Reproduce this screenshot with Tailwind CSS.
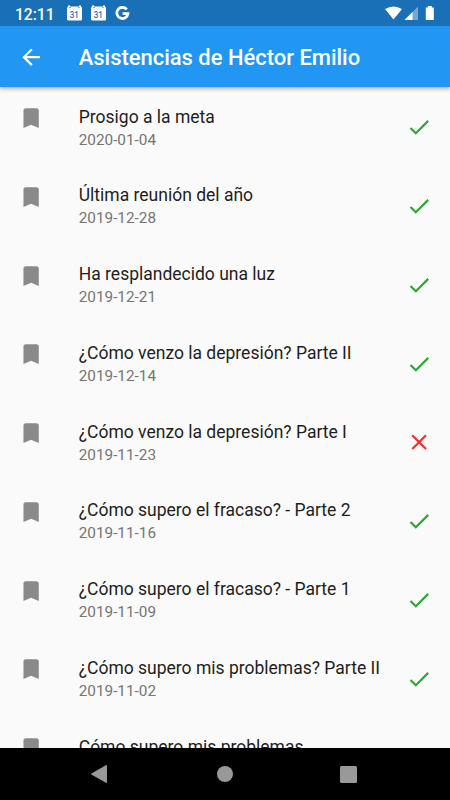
<!DOCTYPE html>
<html lang="es">
<head>
<meta charset="utf-8">
<title>Asistencias</title>
<script src="https://cdn.jsdelivr.net/npm/@tailwindcss/browser@4"></script>
</head>
<body class="w-[450px] h-[800px] overflow-hidden flex flex-col bg-[#fafafa] font-['Roboto',sans-serif]">
<header class="relative z-10 shrink-0 h-[87px] bg-[#2196f3] text-white shadow-[0_2px_4px_rgba(0,0,0,0.3)]">
  <div class="h-[26px] bg-[#1a70b7] flex items-center pl-[15px] pr-[15px]">
    <span class="w-[52px] text-[15.6px] leading-[26px] font-medium pt-[3px]">12:11</span>
    <svg class="w-[15px] h-[16px]" viewBox="0 0 15 16"><path fill="#fff" d="M1 .5h2v1h9v-1h2v1.200q1 .3 1 1.300v11q0 1.500-1.500 1.500h-12Q0 15.500 0 14V3Q0 2 1 1.700z"/><path fill="#1a70b7" d="M2.500 2h1v1h-1zM11.500 2h1v1h-1z"/><text x="7.300" y="12.800" text-anchor="middle" font-family="Roboto" font-size="9" font-weight="500" textLength="9" lengthAdjust="spacingAndGlyphs" fill="#1a70b7">31</text></svg>
    <svg class="ml-[9px] w-[15px] h-[16px]" viewBox="0 0 15 16"><path fill="#fff" d="M1 .5h2v1h9v-1h2v1.200q1 .3 1 1.300v11q0 1.500-1.500 1.500h-12Q0 15.500 0 14V3Q0 2 1 1.700z"/><path fill="#1a70b7" d="M2.500 2h1v1h-1zM11.500 2h1v1h-1z"/><text x="7.300" y="12.800" text-anchor="middle" font-family="Roboto" font-size="9" font-weight="500" textLength="9" lengthAdjust="spacingAndGlyphs" fill="#1a70b7">31</text></svg>
    <svg class="ml-[9px] w-[15px] h-[15px]" viewBox="0 0 15 15" fill="none" stroke="#fff" stroke-width="2.700"><path d="M11.800 3.400A5.600 5.600 0 1 0 13 7.600H7.600"/></svg>
    <svg class="ml-auto w-[50px] h-[16px]" viewBox="0 0 50 16"><path fill="#fff" d="M0 4.100Q8.500-1 17 4.100L8.500 14.500z"/><path fill="#fff" fill-opacity=".4" d="M33 1.500V15H19.500z"/><path fill="#fff" d="M27.500 7v8h-8zM42.800 1h4v1.500h2V15h-8V2.500h2z"/></svg>
  </div>
  <div class="h-[61px] flex items-center pl-[17.5px] pt-[1px]">
    <svg class="w-[26.25px] h-[26.25px]" viewBox="0 0 24 24" fill="#fff"><path d="M20 11H7.830l5.590-5.590L12 4l-8 8 8 8 1.410-1.410L7.830 13H20v-2z"/></svg>
    <h1 class="ml-[35px] pt-px text-[21.95px] leading-[26px] font-medium whitespace-nowrap">Asistencias de Héctor Emilio</h1>
  </div>
</header>
<main id="list" class="flex-1 min-h-0 overflow-hidden pt-[0.5px]"></main>
<nav class="shrink-0 h-[52px] bg-black flex items-center pl-[91px] pr-[93px] justify-between">
  <svg class="w-[16px] h-[18px]" viewBox="0 0 16 18"><path fill="#999" d="M15.300 0q.7 0 .7.700v16.600q0 .7-.7.700L.4 9.500Q0 9 .4 8.500z"/></svg>
  <span class="w-[16px] h-[16px] rounded-full bg-[#999] ml-[2px]"></span>
  <span class="w-[17px] h-[17px] rounded-[1.5px] bg-[#999]"></span>
</nav>
<script>
const rows = [
  ['Prosigo a la meta', '2020-01-04', true],
  ['Última reunión del año', '2019-12-28', true],
  ['Ha resplandecido una luz', '2019-12-21', true],
  ['¿Cómo venzo la depresión? Parte II', '2019-12-14', true],
  ['¿Cómo venzo la depresión? Parte I', '2019-11-23', false],
  ['¿Cómo supero el fracaso? - Parte 2', '2019-11-16', true],
  ['¿Cómo supero el fracaso? - Parte 1', '2019-11-09', true],
  ['¿Cómo supero mis problemas? Parte II', '2019-11-02', true],
  ['Cómo supero mis problemas', '', true],
];
const check = '<path fill="#2ba832" d="M9 16.170L4.830 12l-1.420 1.410L9 19 21 7l-1.410-1.410z"/>';
const cross = '<path fill="#f4302f" d="M19 6.410L17.590 5 12 10.590 6.410 5 5 6.410 10.590 12 5 17.590 6.410 19 12 13.410 17.590 19 19 17.590 13.410 12z"/>';
document.getElementById('list').innerHTML = rows.map(([title, date, ok]) => `
  <div class="h-[78.75px] flex items-start px-[17.5px]">
    <svg class="mt-[17.5px] w-[26.25px] h-[26.25px] shrink-0" viewBox="0 0 24 24"><path fill="#8a8a8a" d="M17 3H7c-1.100 0-1.990.9-1.990 2L5 21l7-3 7 3V5c0-1.100-.9-2-2-2z"/></svg>
    <div class="ml-[35px] mt-[18.2px] flex-1 whitespace-nowrap">
      <p class="text-[17.5px] leading-[23px] text-[#1e1e1e]">${title}</p>
      <p class="text-[15.3px] leading-[23px] text-[#757575]">${date}</p>
    </div>
    <svg class="mt-[26.75px] w-[26.25px] h-[26.25px] shrink-0" viewBox="0 0 24 24">${ok ? check : cross}</svg>
  </div>`).join('');
</script>
</body>
</html>
